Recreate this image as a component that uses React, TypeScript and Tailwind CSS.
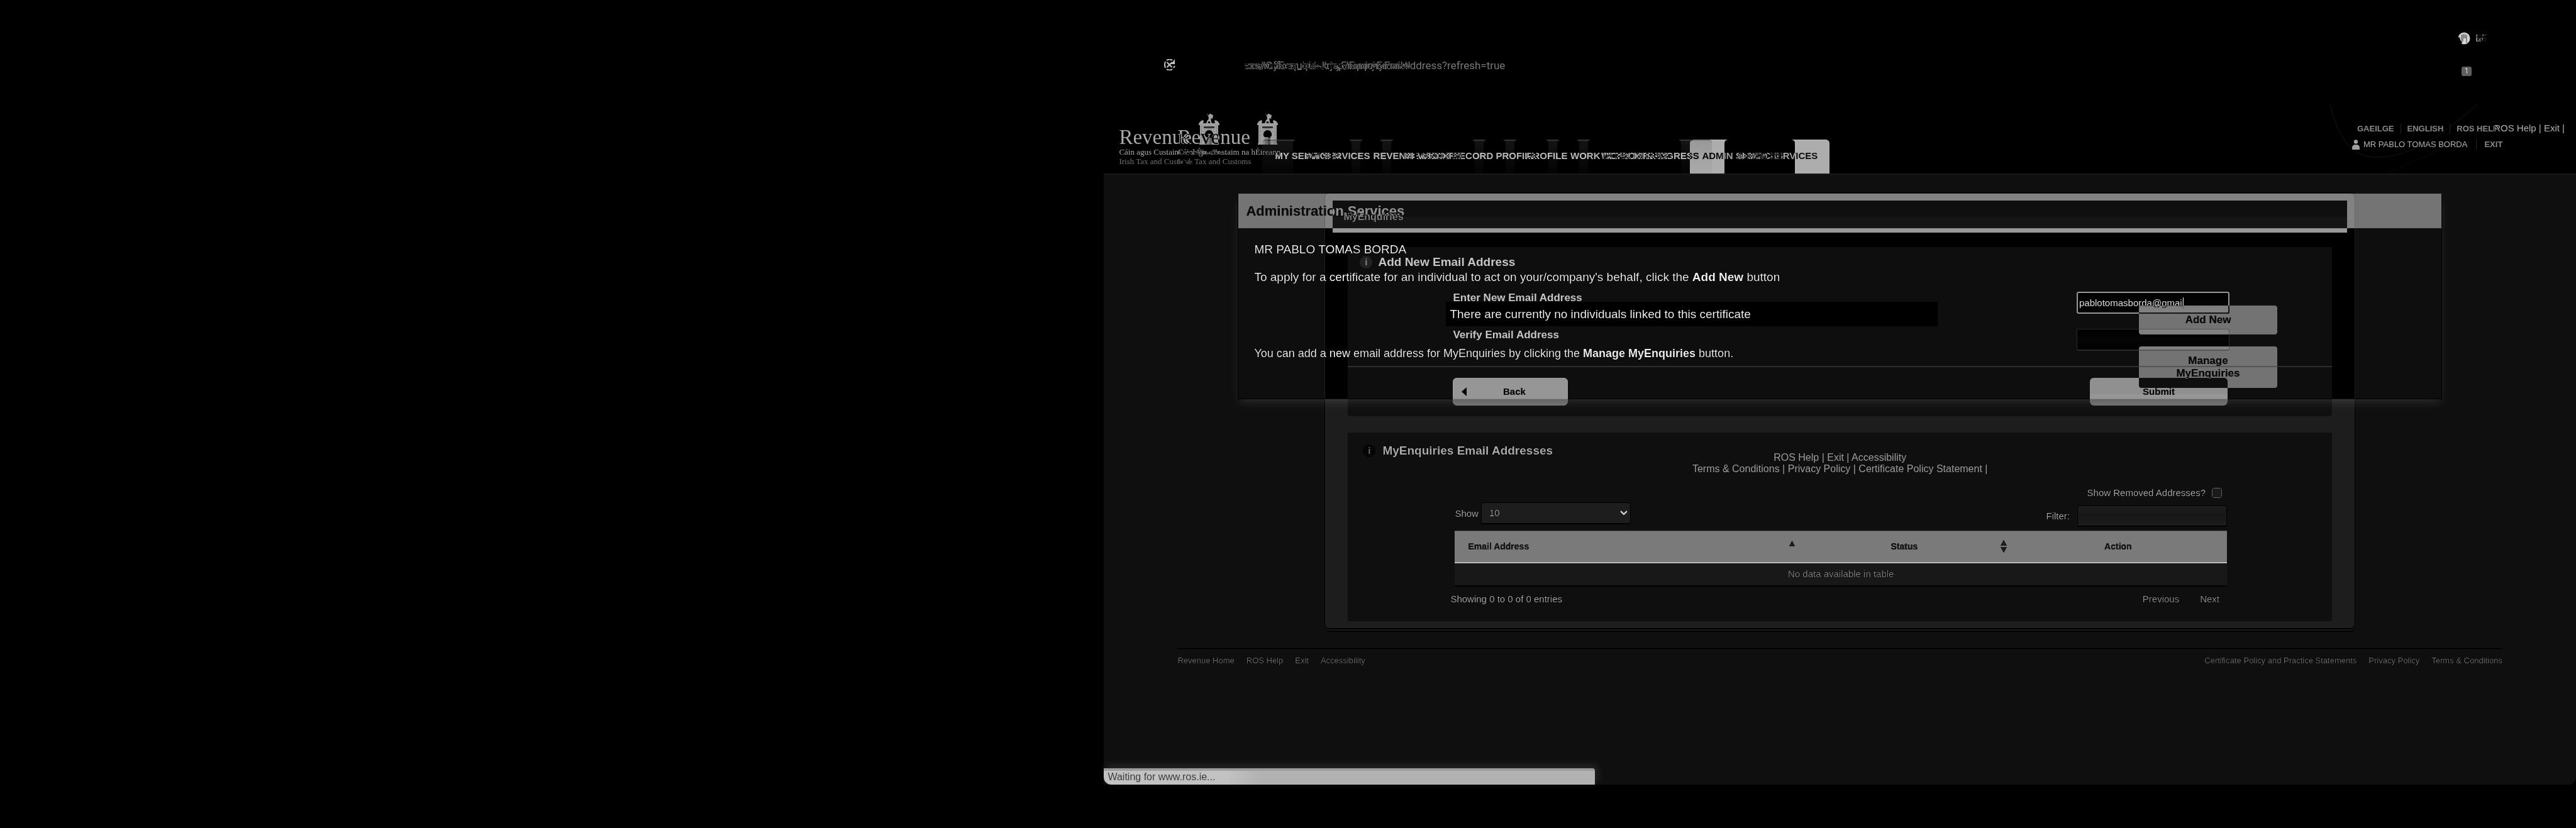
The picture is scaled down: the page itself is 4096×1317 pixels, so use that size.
import React from "react";

function Tower() {
  return (
    <svg width="33" height="50" viewBox="0 0 33 50" aria-hidden="true" className="shrink-0">
      <g fill="#a0a0a0">
        <path d="M13 0l3 4 1-3h2l1 1 3 1-1 6-3-1 1 4h-5l1-5z" />
        <path d="M14 11h5l2 5h5l-1-3 1-2q5 1 7 6v2H0v-2q2-5 7-6l1 2-1 3h5z" />
        <path d="M2 19h29v29h1v2H21V38q3-2 2-6-2-5-6.500-5T10 32q-1 4 2 6v12H1v-2h1z" />
      </g>
      <path fill="#000" d="M14.500 16l1-3h2l1 3z" />
      <path fill="#303030" d="M8 21h17v3H8z" />
      <path fill="#606060" d="M17 39h4v11h-4z" />
      <path fill="#808080" d="M12 38h5v12h-5z" />
      <path d="M4.500 20v28M28.500 20v28" stroke="#707070" strokeWidth="2" strokeDasharray="1 2" />
      <path d="M8 30q2-5 8.500-5t8.500 5" fill="none" stroke="#606060" strokeWidth="1" strokeDasharray="1 1" />
    </svg>
  );
}

function Logo() {
  return (
    <a href="#" className="block w-[160px] shrink-0 whitespace-nowrap pt-[14px] font-['Liberation_Serif',serif] text-[#a8a8a8]">
      <span className="flex h-[50px] items-start gap-[11px]">
        <span className="mt-[22px] w-[116px] text-[33px] leading-[33px]">Revenue</span>
        <Tower />
      </span>
      <span className="mt-1 block text-[13px] leading-[15px]">Cáin agus Custaim na hÉireann</span>
      <span className="block text-[13px] leading-[15px] text-[#707070]">Irish Tax and Customs</span>
    </a>
  );
}

const TAB =
  "flex h-[54px] items-center justify-center rounded-t-[5px] border-t-2 border-[#343434] bg-linear-to-b from-[#141414] to-[#040404] pb-1 text-[#c0c0c0]";
const ACTIVE =
  "flex h-[54px] items-center justify-center rounded-t-[6px] border-t border-[#bbbbbb] bg-[#adadad] pb-1 text-[#0a0a0a]";

function Nav({ last }: { last: string }) {
  return (
    <nav className="flex gap-[14px] self-end whitespace-nowrap text-[15px] font-bold leading-5">
      <a href="#" className={`${TAB} w-[142px]`}>MY SERVICES</a>
      <a href="#" className={`${TAB} w-[182px]`}>REVENUE RECORD</a>
      <a href="#" className={`${TAB} w-[103px]`}>PROFILE</a>
      <a href="#" className={`${TAB} w-[197px]`}>WORK IN PROGRESS</a>
      <a href="#" className={`${ACTIVE} w-[167px] ${last}`}>ADMIN SERVICES</a>
    </nav>
  );
}

function AdministrationPage() {
  return (
    <div className="flex min-h-screen flex-col bg-black pb-[69px] [grid-area:1/1]">
      <div className="h-[166px] font-[Roboto,sans-serif]">
        <div className="flex h-[94px] items-start justify-end gap-[9px] pr-[139px] pt-[51px]">
          <svg width="20" height="20" viewBox="0 0 20 20" aria-hidden="true">
            <circle cx="10" cy="10" r="9.500" fill="#d4d4d4" />
            <path fill="#888" d="M5 3l2 2 2-3 1 3 2-3 1 3 2-1v13h-2v-6q-3-3-4 0v4H5z" />
            <path fill="#000" d="M0 9q0 7 6 10l1-3q-4-3-4-8z" />
          </svg>
          <span className="w-5 text-[15px] leading-5 text-[#a8a8a8]">96</span>
        </div>
        <div className="flex items-start pl-24">
          <svg width="18" height="18" viewBox="0 0 18 18" fill="none" stroke="#c4c4c4" strokeWidth="2" aria-hidden="true" className="shrink-0">
            <path d="M4 2q5-3 9 0M2 4q-2 5 0 10M4 16q5 3 9 0M15 14l2-3M4.500 5l8 8M12.500 5l-8 8" />
            <path d="M17 0v8h-6z" fill="#c4c4c4" stroke="none" />
          </svg>
          <span className="ml-[109px] whitespace-nowrap text-[17px] leading-5 text-[#787878]">acs/Officer_quick.jsp/EnquiryEmail</span>
          <span className="ml-auto mr-[166px] mt-3 h-[15px] w-4 rounded-[3px] bg-[#606060] text-center text-[12px] leading-[15px] text-[#dddddd]">1</span>
        </div>
      </div>
      <header className="relative flex h-[110px] pl-6">
        <svg viewBox="0 0 400 110" className="absolute right-0 top-0 h-[110px] w-[400px]" fill="none" stroke="#0b0b0b" strokeWidth="2" aria-hidden="true">
          <path d="M9 0C24 60 45 84 83 84c60 0 110-40 160-84" />
          <path d="M96 110c60-24 100-40 150-80" strokeWidth="1" />
        </svg>
        <Logo />
        <span className="w-[68px] shrink-0" />
        <Nav last="" />
        <div className="relative ml-auto mt-[28px] whitespace-nowrap pr-[18px] text-[15px] leading-5 text-[#b0b0b0]">
          <a href="#">ROS Help</a> | <a href="#">Exit</a> |
        </div>
      </header>
      <main className="grow rounded-br-xl border-t-2 border-[#d8d8d8] bg-[#e2e2e2] text-black">
        <section className="mx-[213px] mt-[30px] border-x border-b border-[#f1f1f1] bg-white shadow-[0_8px_14px_-4px_rgba(0,0,0,0.13)]">
          <h1 className="bg-[#7d7d7d] pl-3 text-[22px] font-bold leading-[55px] text-white">Administration Services</h1>
          <div className="px-[25px] pb-[17px] pt-[22px] text-[19px] leading-6">
            <p>MR PABLO TOMAS BORDA</p>
            <p className="mt-5">
              To apply for a certificate for an individual to act on your/company's behalf, click the <b>Add New</b> button
            </p>
            <div className="mt-[27px] grid grid-cols-[1fr_220px] items-start gap-y-[18px] pr-[236px]">
              <p className="ml-[305px] w-[782px] bg-[#f1f1f1] pl-[6px] leading-[39px]">
                There are currently no individuals linked to this certificate
              </p>
              <button type="button" className="mt-[6px] h-[46px] rounded-[4px] bg-[#7e7e7e] text-[17px] font-bold leading-5 text-white">
                Add New
              </button>
              <p className="text-[18px]">
                You can add a new email address for MyEnquiries by clicking the <b>Manage MyEnquiries</b> button.
              </p>
              <button type="button" className="mt-[1px] h-[66px] rounded-[4px] bg-[#7e7e7e] px-10 text-[17px] font-bold leading-5 text-white">
                Manage MyEnquiries
              </button>
            </div>
          </div>
        </section>
        <div className="mt-[84px] text-center text-base leading-[18px] text-[#555555]">
          <p><a href="#">ROS Help</a> | <a href="#">Exit</a> | <a href="#">Accessibility</a></p>
          <p><a href="#">Terms &amp; Conditions</a> | <a href="#">Privacy Policy</a> | <a href="#">Certificate Policy Statement</a> |</p>
        </div>
      </main>
    </div>
  );
}

function Info() {
  return (
    <span className="flex h-5 w-5 shrink-0 items-center justify-center rounded-full bg-[#dddddd] text-[15px] leading-5 text-[#7c7c7c]">i</span>
  );
}

function EnquiriesPage() {
  return (
    <div className="flex min-h-screen flex-col bg-black pb-[69px] mix-blend-difference [grid-area:1/1]">
      <div className="h-[166px] font-[Roboto,sans-serif]">
        <div className="flex h-[94px] justify-end pr-[140px] pt-[51px] text-[15px] leading-5 text-[#a8a8a8]">
          <span className="w-5">R5</span>
        </div>
        <p className="whitespace-nowrap pl-[223px] text-[17px] leading-5 text-[#787878]">
          ros/myEnquiries/myEnquiryEmailAddress?refresh=true
        </p>
      </div>
      <header className="flex h-[110px] pl-[117px]">
        <Logo />
        <span className="w-[24px] shrink-0" />
        <Nav last="ml-[6px]" />
        <div className="ml-auto w-[356px] whitespace-nowrap pt-[31px] text-[13px] leading-4 text-[#b0b0b0]">
          <div className="flex gap-[10px] pl-2 font-bold text-[#888888]">
            <a href="#">GAEILGE</a>
            <span className="w-px bg-[#222222]" />
            <a href="#">ENGLISH</a>
            <span className="w-px bg-[#222222]" />
            <a href="#">ROS HELP</a>
          </div>
          <div className="mt-[9px] flex">
            <svg width="12" height="16" viewBox="0 0 12 16" fill="#a0a0a0" aria-hidden="true">
              <circle cx="6" cy="3.500" r="3.200" />
              <path d="M0 16v-3q0-5 6-5t6 5v3z" />
            </svg>
            <span className="ml-[6px]">MR PABLO TOMAS BORDA</span>
            <span className="ml-[14px] mr-3 w-px bg-[#222222]" />
            <a href="#" className="font-bold text-[#888888]">EXIT</a>
          </div>
        </div>
      </header>
      <main className="grow rounded-br-xl border-t-2 border-[#f1f1f1] bg-[#f1f1f1] text-[#383838]">
        <div className="mx-[351px] mt-7 rounded-lg border border-b-2 border-[#e2e2e2] bg-white pb-[11px] pt-3 shadow-[0_2px_0_#fff,0_4px_0_#e4e4e4]">
          <h1 className="mx-3 bg-linear-to-b from-[#6e6e6e] from-50% to-[#686868] to-50% pl-[17px] text-base font-bold leading-[51px] text-white">
            MyEnquiries
          </h1>
          <form className="mx-9 mt-[23px] rounded-b-[4px] bg-[#f1f1f1] pb-[17px] pt-3" onSubmit={(e) => e.preventDefault()}>
            <h2 className="flex items-center gap-[9px] pl-[19px] text-[19px] font-bold leading-6">
              <Info />
              Add New Email Address
            </h2>
            <div className="mb-6 mt-[35px] grid grid-cols-[1fr_243px] items-start gap-y-6 pl-[167px] pr-[163px]">
              <label htmlFor="email" className="text-[17px] font-bold leading-5">Enter New Email Address</label>
              <div className="flex h-[35px] items-center rounded-[3px] border-2 border-[#686868] bg-linear-to-b from-white via-[#fafafa] to-white">
                <input
                  id="email"
                  defaultValue="pablotomasborda@gmail"
                  className="h-full w-[167px] bg-transparent pl-[2px] text-[15px] leading-5 text-[#222222] outline-none"
                />
                <span className="h-[18px] w-px bg-[#222222]" />
              </div>
              <label htmlFor="verify" className="text-[17px] font-bold leading-5">Verify Email Address</label>
              <input
                id="verify"
                className="h-[35px] w-full rounded-[3px] border border-b-2 border-[#d4d4d4] bg-linear-to-b from-white via-[#fafafa] to-white outline-none"
              />
            </div>
            <div className="flex justify-between border-t-2 border-[#d2d2d2] pl-[167px] pr-[166px] pt-[17px] text-[15px] font-bold leading-5 text-white">
              <button type="button" className="flex h-11 w-[183px] items-center rounded-[6px] border border-[#606060] bg-[#696969] pl-[13px]">
                <svg width="8" height="14" viewBox="0 0 8 14" fill="#fff" aria-hidden="true"><path d="M8 0v14L0 7z" /></svg>
                <span className="grow pr-[9px] text-center">Back</span>
              </button>
              <button type="submit" className="h-11 w-[219px] rounded-[6px] bg-linear-to-b from-[#6f6f6f] from-60% to-[#696969] to-60%">Submit</button>
            </div>
          </form>
          <section className="mx-9 mt-[26px] bg-[#f1f1f1] pb-[25px] pl-[163px] pr-[167px] pt-[17px] text-[15px] leading-5">
            <h2 className="-ml-[139px] flex items-center gap-[11px] text-[19px] font-bold leading-6">
              <Info />
              MyEnquiries Email Addresses
            </h2>
            <div className="mt-[45px] flex items-center justify-end gap-[10px] pr-2">
              <label htmlFor="removed">Show Removed Addresses?</label>
              <input id="removed" type="checkbox" className="h-4 w-4 appearance-none rounded-[3px] border border-[#808080] bg-[#fdfdfd]" />
            </div>
            <div className="ml-[7px] mt-[5px] flex justify-between">
              <div className="relative flex h-[35px] items-center gap-[4px]">
                <label htmlFor="count">Show</label>
                <select id="count" className="h-[35px] w-[238px] appearance-none rounded-[4px] border border-b-2 border-[#e2e2e2] bg-white pl-3 text-[15px] outline-none">
                  <option>10</option>
                </select>
                <svg width="12" height="10" viewBox="0 0 12 10" fill="none" stroke="#111" strokeWidth="2.500" aria-hidden="true" className="pointer-events-none absolute right-[5px] top-3">
                  <path d="M1 2l5 5 5-5" />
                </svg>
              </div>
              <div className="mt-[5px] flex h-[34px] items-center gap-3">
                <label htmlFor="filter">Filter:</label>
                <input id="filter" className="h-[34px] w-[238px] rounded-[3px] border border-b-2 border-[#e2e2e2] bg-linear-to-b from-white via-[#f9f9f9] to-white outline-none" />
              </div>
            </div>
            <table className="ml-[7px] mt-[6px] w-[calc(100%-7px)] table-fixed border-collapse">
              <thead className="text-sm">
                <tr className="h-[50px] border-b-2 border-t border-b-[#272727] border-t-[#8c8c8c] bg-[#686868] text-white">
                  <th className="w-[44.6%] text-left">
                    <span className="flex items-center justify-between pl-[21px] pr-[7px]">
                      Email Address
                      <svg width="9" height="20" viewBox="0 0 9 20" fill="#fff" aria-hidden="true"><path d="M4.500 1l4.500 9H0z" /></svg>
                    </span>
                  </th>
                  <th className="relative w-[27.2%]">
                    Status
                    <svg width="10" height="20" viewBox="0 0 10 20" fill="#fff" aria-hidden="true" className="absolute right-1 top-[14px]">
                      <path d="M5 0l5 9H0zM0 11h10l-5 9z" />
                    </svg>
                  </th>
                  <th>Action</th>
                </tr>
              </thead>
              <tbody>
                <tr className="h-[37px] border-b-2 border-[#e2e2e2] bg-[#fafafa]">
                  <td colSpan={3} className="text-center text-[#606060]">No data available in table</td>
                </tr>
              </tbody>
            </table>
            <div className="mt-[10px] flex">
              <span className="grow">Showing 0 to 0 of 0 entries</span>
              <button type="button" className="text-[#555555]">Previous</button>
              <button type="button" className="ml-[33px] mr-[12px] text-[#555555]">Next</button>
            </div>
          </section>
        </div>
        <footer className="mx-[117px] mt-[30px] flex gap-[19px] border-t-2 border-[#e3e3e3] pt-[10px] text-[13px] leading-4 text-[#787878] shadow-[inset_0_1px_0_#fafafa]">
          <a href="#">Revenue Home</a>
          <a href="#">ROS Help</a>
          <a href="#">Exit</a>
          <a href="#">Accessibility</a>
          <a href="#" className="ml-auto">Certificate Policy and Practice Statements</a>
          <a href="#">Privacy Policy</a>
          <a href="#">Terms &amp; Conditions</a>
        </footer>
      </main>
    </div>
  );
}

export default function App() {
  return (
    <div className="isolate grid min-h-screen grid-cols-[3fr_4fr] overflow-hidden bg-black font-['Liberation_Sans',Arial,sans-serif]">
      <div />
      <div className="isolate grid grid-cols-1">
        <AdministrationPage />
        <EnquiriesPage />
        <div className="z-10 mb-[69px] w-1/3 self-end rounded-bl-xl rounded-tr-[4px] border-t-4 border-[#9c9c9c] bg-linear-to-r from-[#c2c2c2] from-25% to-[#b2b2b2] to-32% pb-[2px] pl-[6px] text-base leading-5 text-[#3c3c3c] shadow-[4px_-4px_14px_rgba(255,255,255,0.12)] [grid-area:1/1]">
          Waiting for www.ros.ie...
        </div>
      </div>
    </div>
  );
}
